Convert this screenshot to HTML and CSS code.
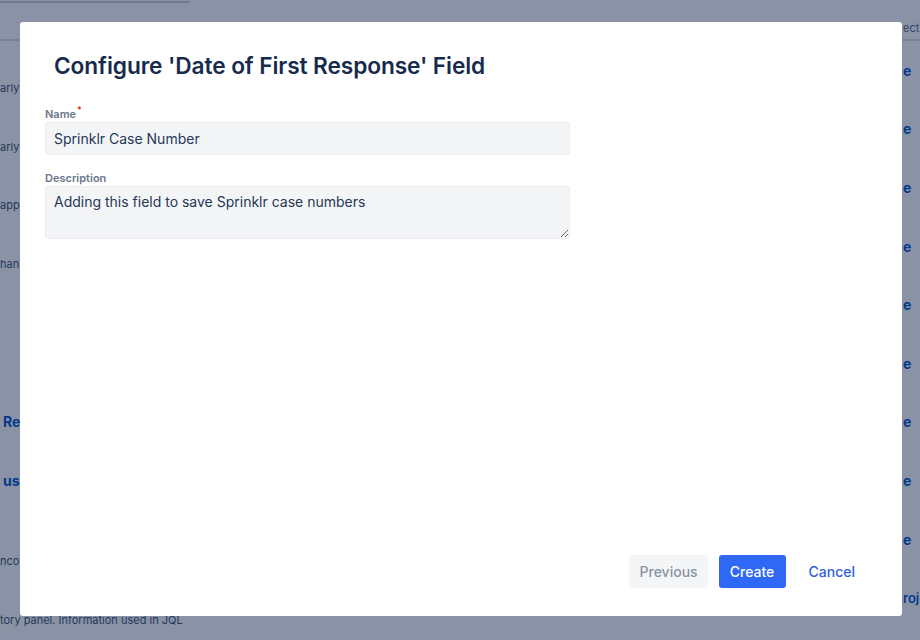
FILE: index.html
```html
<!DOCTYPE html>
<html lang="en">
<head>
<meta charset="utf-8">
<title>Configure field</title>
<link rel="stylesheet" href="styles.css">
</head>
<body>
<div class="page">
  <div class="search"></div>
  <div class="thead"><span class="th-left"></span><span class="th-right">ect</span></div>
  <div class="row"><span class="desc">arly</span><span class="link">e</span></div>
  <div class="row"><span class="desc">arly</span><span class="link">e</span></div>
  <div class="row"><span class="desc">appr</span><span class="link">e</span></div>
  <div class="row"><span class="desc">han</span><span class="link">e</span></div>
  <div class="row"><span class="desc"></span><span class="link">e</span></div>
  <div class="row"><span class="desc"></span><span class="link">e</span></div>
  <div class="row"><span class="name">Re</span><span class="link">e</span></div>
  <div class="row"><span class="name">us</span><span class="link">e</span></div>
  <div class="row"><span class="desc desc-low">nco</span><span class="link">e</span></div>
  <div class="row"><span class="desc desc-low">tory panel. Information used in JQL</span><span class="link link-last">roj</span></div>
</div>
<div class="overlay"></div>
<div class="modal">
  <h1 class="title">Configure 'Date of First Response' Field</h1>
  <div class="field">
    <label class="label" for="name">Name<span class="req">*</span></label>
    <input class="input" id="name" type="text" value="Sprinklr Case Number">
  </div>
  <div class="field">
    <label class="label" for="desc">Description</label>
    <textarea class="input area" id="desc">Adding this field to save Sprinklr case numbers</textarea>
  </div>
  <div class="footer">
    <button class="btn btn-prev">Previous</button>
    <button class="btn btn-primary">Create</button>
    <button class="btn btn-link">Cancel</button>
  </div>
</div>
</body>
</html>
```
FILE: styles.css
```css
html, body {
  margin: 0;
  padding: 0;
  width: 920px;
  height: 640px;
  overflow: hidden;
  background: #ffffff;
  font-family: Inter, "Noto Sans", "Liberation Sans", sans-serif;
}

.page {
  display: flex;
  flex-direction: column;
  width: 920px;
}

.search {
  width: 190px;
  height: 1px;
  border-bottom: 2px solid #c9ced8;
}

.thead {
  height: 38px;
  box-sizing: border-box;
  padding-bottom: 4px;
  display: flex;
  justify-content: space-between;
  align-items: flex-end;
  border-bottom: 2px solid #dfe1e6;
  font-size: 11px;
  color: #5e6c84;
}

.th-right {
  width: 17px;
  white-space: nowrap;
}

.row {
  height: 58.6px;
  display: flex;
  justify-content: space-between;
  align-items: center;
  font-size: 11px;
}

.desc {
  color: #42526e;
  white-space: nowrap;
  margin-top: 36px;
}

.desc-low {
  margin-top: 44px;
}

.name {
  color: #0052cc;
  font-weight: 700;
  font-size: 14px;
  white-space: nowrap;
  padding-left: 3px;
}

.link {
  width: 17px;
  color: #0052cc;
  font-weight: 700;
  font-size: 14px;
  white-space: nowrap;
}

.link-last {
  font-weight: 600;
  font-size: 13px;
}

.overlay {
  position: fixed;
  inset: 0;
  background: rgba(9, 30, 66, 0.48);
}

.modal {
  position: fixed;
  left: 20px;
  top: 22px;
  width: 882px;
  height: 594px;
  box-sizing: border-box;
  background: #ffffff;
  border-radius: 3px;
  padding: 29px 35px 28px 25px;
  display: flex;
  flex-direction: column;
}

.title {
  margin: 0 0 22px 9px;
  font-size: 22.7px;
  line-height: 30px;
  font-weight: 600;
  color: #172b4d;
  letter-spacing: -0.1px;
}

.field {
  display: flex;
  flex-direction: column;
  width: 525px;
  margin-bottom: 16px;
}

.label {
  font-size: 11px;
  line-height: 14px;
  font-weight: 600;
  color: #6b778c;
  margin-bottom: 1px;
}

.req {
  color: #de350b;
  font-size: 9px;
  vertical-align: 5px;
  margin-left: 1px;
}

.input {
  box-sizing: border-box;
  width: 525px;
  height: 33px;
  margin: 0;
  padding: 0 8px;
  background: #f4f5f7;
  border: 1px solid #ebecf0;
  border-radius: 3px;
  font-family: Inter, "Noto Sans", "Liberation Sans", sans-serif;
  font-size: 14px;
  color: #253858;
  outline: none;
}

.area {
  height: 53px;
  padding: 6px 8px;
  line-height: 18px;
  resize: vertical;
}

.footer {
  margin-top: auto;
  display: flex;
  justify-content: flex-end;
  align-items: center;
  gap: 11px;
}

.btn {
  height: 33px;
  box-sizing: border-box;
  border: none;
  border-radius: 3px;
  font-family: Inter, "Noto Sans", "Liberation Sans", sans-serif;
  font-size: 14px;
  font-weight: 500;
  padding: 0 11px;
  cursor: pointer;
}

.btn-prev {
  width: 79px;
  background: #f4f5f7;
  color: #8993a4;
}

.btn-primary {
  width: 67px;
  background: #2e68f5;
  color: #ffffff;
}

.btn-link {
  background: transparent;
  color: #2e5fd8;
  padding: 0 12px;
}
```
